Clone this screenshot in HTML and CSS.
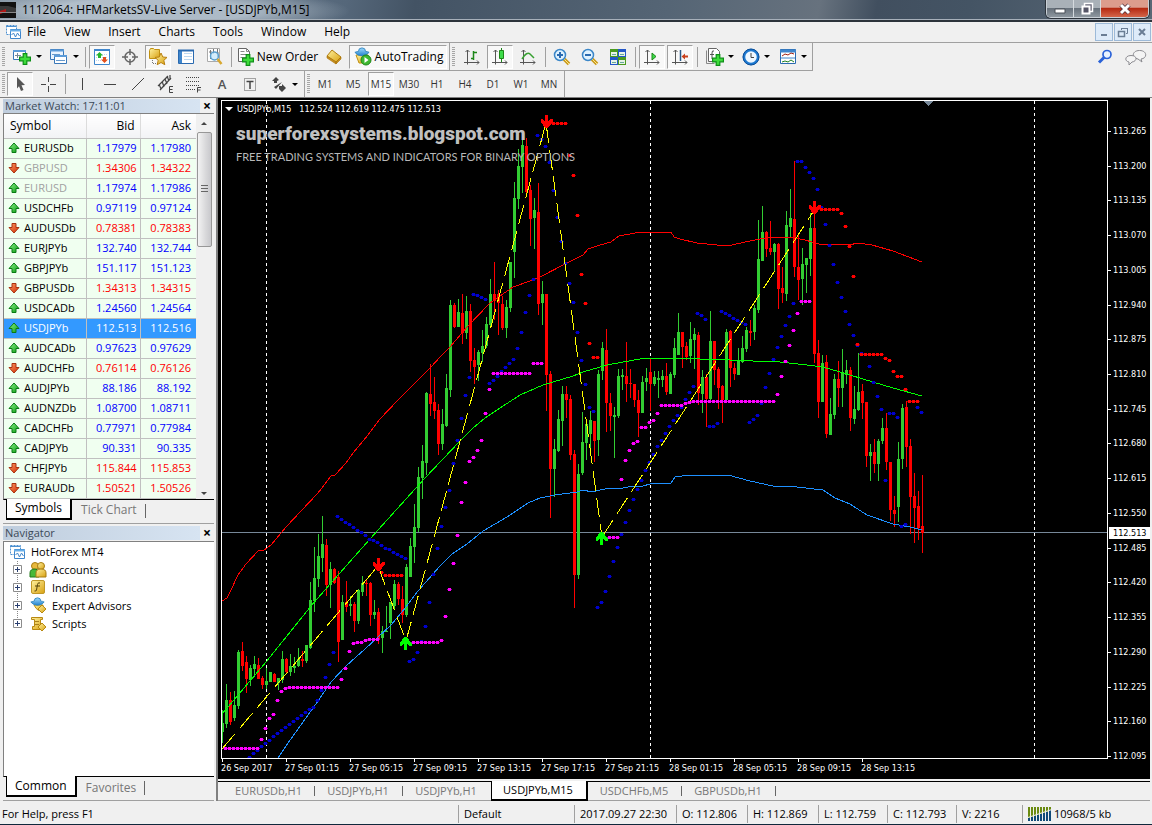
FILE: index.html
```html
<!DOCTYPE html>
<html lang="en">
<head>
<meta charset="utf-8">
<title>1112064: HFMarketsSV-Live Server - [USDJPYb,M15]</title>
<link rel="stylesheet" href="styles.css">
<script src="chart.js" defer></script>
</head>
<body>
<svg class="defs" aria-hidden="true">
  <defs>
    <linearGradient id="gGreen" x1="0" y1="0" x2="1" y2="1"><stop offset="0" stop-color="#8df58a"/><stop offset="1" stop-color="#0a9a12"/></linearGradient>
    <linearGradient id="gRed" x1="0" y1="0" x2="1" y2="1"><stop offset="0" stop-color="#ff9a66"/><stop offset="1" stop-color="#d02c00"/></linearGradient>
    <linearGradient id="gGold" x1="0" y1="0" x2="1" y2="1"><stop offset="0" stop-color="#fff2a0"/><stop offset="1" stop-color="#d8a010"/></linearGradient>
    <linearGradient id="gBlue" x1="0" y1="0" x2="0" y2="1"><stop offset="0" stop-color="#9fdcff"/><stop offset="1" stop-color="#2280cc"/></linearGradient>
    <symbol id="up" viewBox="0 0 12 12"><path d="M6 1 11 6.500H8V10.500H4V6.500H1Z" fill="url(#gGreen)" stroke="#0a7a14"/></symbol>
    <symbol id="down" viewBox="0 0 12 12"><path d="M6 11 11 5.500H8V1.500H4V5.500H1Z" fill="url(#gRed)" stroke="#a83210"/></symbol>
    <symbol id="charts" viewBox="0 0 16 16"><path d="M1.500 1.500h10v9h-10z" fill="#fff" stroke="#4d90d0" stroke-dasharray="2 1"/><path d="M1.500 2.500h10" stroke="#4d90d0"/><path d="M5.500 5.500h10v9h-10z" fill="#fff" stroke="#3f86cc"/><path d="M5 6.500h11" stroke="#69aee8" stroke-width="2"/><path d="M6.500 11l2-2 2 4 2-4 2 3" fill="none" stroke="#3f86cc"/></symbol>
    <symbol id="plus" viewBox="0 0 10 10"><path d="M3.500.5h3v3h3v3h-3v3h-3v-3h-3v-3h3z" fill="#3ddc3a" stroke="#0c8f16"/></symbol>
    <symbol id="axes" viewBox="0 0 18 18"><path d="M4.500 2v14.500M1 14.500h15M2.500 4l2-2 2 2M14 12.500l2 2-2 2" fill="none" stroke="#555"/></symbol>
    <symbol id="hat" viewBox="0 0 18 18"><path d="M1 6q3-1 4-1 0-4 4-4t4 4q2 0 4 1-3 4-8 4t-8-4z" fill="url(#gBlue)" stroke="#2d83bd"/></symbol>
    <symbol id="box" viewBox="0 0 9 9"><path d="M.5.5h8v8h-8z" fill="#fff" stroke="#8c8c8c"/><path d="M2 4.500h5M4.500 2v5" stroke="#2a3f70"/></symbol>
  </defs>
</svg>
<div class="app">
  <header class="title">
    <svg class="logo" width="16" height="16" viewBox="0 0 16 16"><path d="M0 0h16v16H0z" fill="#111"/><path d="M0 4h8l8 2v4H0z" fill="#383838"/><path d="M0 9l6-2v3l-6 2z" fill="#b01818"/><path d="M0 10h16v1H0z" fill="#888"/></svg>
    <h1>1112064: HFMarketsSV-Live Server - [USDJPYb,M15]</h1>
    <div class="winbtns">
      <button aria-label="Minimize"><svg width="14" height="12"><path d="M2 6h10v4H2z" fill="#fff" stroke="#4a5058"/></svg></button>
      <button aria-label="Restore"><svg width="14" height="14"><path d="M4.500 1.500h8v8h-8z" fill="#667" stroke="#fff" stroke-width="1.500"/><path d="M2.500 4.500h7v7h-7z" fill="#556" stroke="#fff" stroke-width="2"/></svg></button>
      <button class="close" aria-label="Close"><svg width="14" height="12"><path d="M3 2l8 8M11 2l-8 8" stroke="#50303a" stroke-width="4.500"/><path d="M3 2l8 8M11 2l-8 8" stroke="#fff" stroke-width="3"/></svg></button>
    </div>
  </header>

  <nav class="menu">
    <svg width="16" height="16"><use href="#charts"/></svg>
    <button>File</button><button>View</button><button>Insert</button><button>Charts</button><button>Tools</button><button>Window</button><button>Help</button>
    <div class="mdi">
      <button aria-label="Minimize chart"><svg width="12" height="12"><path d="M3 9h6" stroke="#6a7d94" stroke-width="2"/></svg></button>
      <button aria-label="Restore chart"><svg width="12" height="12"><path d="M4.500 4V2.500h6v5H9M4 2.500h7" fill="none" stroke="#6a7d94"/><path d="M1.500 5.500h6v5h-6zM1 5.500h7" fill="none" stroke="#6a7d94" stroke-width="1.500"/></svg></button>
      <button aria-label="Close chart"><svg width="12" height="12"><path d="M3 3l6 6M9 3l-6 6" stroke="#6a7d94" stroke-width="2"/></svg></button>
    </div>
  </nav>

  <div class="bar">
    <div class="group">
      <i class="grip"></i>
      <button class="tb drop" aria-label="New chart"><svg width="20" height="18"><path d="M1.500 2.500h12v9h-12z" fill="#fff" stroke="#3a78b8"/><path d="M1 3h13" stroke="#5c9bd8" stroke-width="2"/><path d="M3 7.500h6M5.500 5v5" stroke="#789"/><use href="#plus" x="7" y="5" width="12" height="12"/></svg></button>
      <button class="tb drop" aria-label="Profiles"><svg width="20" height="18"><path d="M1.500 1.500h13v10h-13z" fill="#eaf4ff" stroke="#3a78b8"/><path d="M1 2.500h14" stroke="#5c9bd8" stroke-width="2"/><path d="M5.500 7.500h12v8h-12z" fill="#fff" stroke="#3a78b8"/><path d="M5 8h13" stroke="#5c9bd8" stroke-width="2"/><path d="M3 6.500h8M7 12.500h9" stroke="#69c"/></svg></button>
      <i class="sep"></i>
      <button class="tb on" aria-label="Market Watch"><svg width="18" height="18"><path d="M1.500 1.500h15v15h-15z" fill="#fff" stroke="#3f86cc"/><path d="M1 2h16" stroke="#3f86cc" stroke-width="2"/><path d="M3 6.500h12M3 9.500h12M3 12.500h12" stroke="#bcd8f0" stroke-dasharray="1 1"/><path d="M6.500 4l3.500 3.500H8V10H5V7.500H3z" fill="#25b52a"/><path d="M11.500 15l3.500-3.500h-2V9h-3v2.500H8z" fill="#e4501c"/></svg></button>
      <button class="tb" aria-label="Data Window"><svg width="18" height="18"><circle cx="9" cy="9" r="5" fill="none" stroke="#666" stroke-width="1.500"/><path d="M9 1v6M9 11v6M1 9h6M11 9h6" stroke="#666" stroke-width="1.500"/></svg></button>
      <button class="tb on" aria-label="Navigator"><svg width="20" height="20"><path d="M1.500 3.500v8h10v-9h-5l-1-1h-3z" fill="url(#gGold)" stroke="#c09010"/><path d="M4.500 13v4M5 16.500h5" stroke="#777" stroke-dasharray="1 1"/><path d="M13 6l1.800 4 4.200.4-3.200 3 1 4.300L13 15.500l-3.800 2.200 1-4.300-3.200-3 4.200-.4z" fill="url(#gGold)" stroke="#b88010"/></svg></button>
      <button class="tb" aria-label="Terminal"><svg width="18" height="18"><path d="M1.500 2.500h15v13h-15z" fill="#fff" stroke="#2a6ab0"/><path d="M2 3h3v12H2z" fill="#3f86cc"/><path d="M7 5.500h8M7 8.500h8M7 11.500h8" stroke="#bcd8f0"/><path d="M1 2.500h16" stroke="#2a6ab0" stroke-width="2"/></svg></button>
      <button class="tb" aria-label="Strategy Tester"><svg width="19" height="19"><path d="M2.500 1.500h12v13h-12z" fill="#fff" stroke="#aaa"/><path d="M5.500 3v9M8.500 2v5M12.500 2v8M4 5h3M11 6h3" stroke="#777"/><circle cx="9.500" cy="9" r="4" fill="#c9e8fb" fill-opacity=".8" stroke="#5aa0d0" stroke-width="1.500"/><path d="M12.500 12l4 5" stroke="#d8a830" stroke-width="2.500"/></svg></button>
      <i class="sep"></i>
      <button class="tb wide"><svg width="19" height="19"><path d="M2.500 1.500h8l3 3v10h-11z" fill="#fff" stroke="#666"/><path d="M10.500 1.500v3h3M4.500 4.500h4M4.500 7.500h7M4.500 10.500h7" fill="none" stroke="#888"/><use href="#plus" x="6" y="7" width="12" height="12"/></svg>New Order</button>
      <button class="tb" aria-label="MetaEditor"><svg width="18" height="18"><path d="M7 2l9 7-5 5-9-6z" fill="url(#gGold)" stroke="#b07d10"/><path d="M2 8l9 6v2L2 10zM11 14l5-5v2l-5 5z" fill="#c8901c" stroke="#a87008" stroke-width=".6"/></svg></button>
      <button class="tb on auto"><svg width="20" height="20"><path d="M3 8h12l-3 8H6z" fill="url(#gGold)" stroke="#c09010"/><use href="#hat" width="18" height="16"/><circle cx="13" cy="13" r="5" fill="#3fb832" stroke="#1d8718"/><path d="M11.500 10v6l4-3z" fill="#fff"/></svg>AutoTrading</button>
    </div>
    <div class="group">
      <i class="grip"></i>
      <button class="tb" aria-label="Bar Chart"><svg width="18" height="18"><use href="#axes"/><path d="M10.500 3v9M8 10.500h2M11 4.500h3" stroke="#1d8718" stroke-width="1.500"/></svg></button>
      <button class="tb on" aria-label="Candlesticks"><svg width="18" height="18"><use href="#axes"/><path d="M10.500 0v14" stroke="#1d8718"/><path d="M8.500 2.500h4v8h-4z" fill="#3ddc4a" stroke="#1d8718"/></svg></button>
      <button class="tb" aria-label="Line Chart"><svg width="18" height="18"><use href="#axes"/><path d="M3 11q5-8 8-5l4 4" fill="none" stroke="#36a030" stroke-width="1.500"/></svg></button>
      <i class="sep"></i>
      <button class="tb" aria-label="Zoom In"><svg width="18" height="18"><path d="M11 11l5 5" stroke="#c99a1c" stroke-width="3.500"/><path d="M11 11l5 5" stroke="#ffe88a"/><circle cx="7" cy="7" r="5.500" fill="#dff2ff" stroke="#3a86c8" stroke-width="1.500"/><path d="M4 7h6M7 4v6" stroke="#2a6ab0" stroke-width="2"/></svg></button>
      <button class="tb" aria-label="Zoom Out"><svg width="18" height="18"><path d="M11 11l5 5" stroke="#c99a1c" stroke-width="3.500"/><path d="M11 11l5 5" stroke="#ffe88a"/><circle cx="7" cy="7" r="5.500" fill="#dff2ff" stroke="#3a86c8" stroke-width="1.500"/><path d="M4 7h6" stroke="#2a6ab0" stroke-width="2"/></svg></button>
      <button class="tb" aria-label="Tile Windows"><svg width="18" height="18"><path d="M1 1h8v8H1zM9 9h8v8H9z" fill="#4a9a20"/><path d="M9 1h8v8H9zM1 9h8v8H1z" fill="#2458c8"/><path d="M2 4h6v4H2zM10 4h6v4h-6zM2 12h6v4H2zM10 12h6v4h-6z" fill="#e8f2e8"/><path d="M3 6.500h4M11 6.500h4M3 14.500h4M11 14.500h4" stroke="#6a9"/></svg></button>
      <i class="sep"></i>
      <button class="tb on" aria-label="Auto Scroll"><svg width="18" height="18"><use href="#axes"/><path d="M9 5v7l4-3.500z" fill="#3ddc4a" stroke="#1d8718"/></svg></button>
      <button class="tb on" aria-label="Chart Shift"><svg width="18" height="18"><use href="#axes"/><path d="M9.500 2v11" stroke="#2a5a88" stroke-width="1.500"/><path d="M10.500 8.500l3.500-3v2h3v2h-3v2z" fill="#c8401c"/></svg></button>
      <i class="sep"></i>
      <button class="tb drop" aria-label="Indicators"><svg width="20" height="19"><path d="M4.500 1.500h8l3 3v10h-11z" fill="#fff" stroke="#666"/><path d="M2.500 3.500v13h8" fill="none" stroke="#888"/><path d="M10 4q-2-1-2 2v6M6 7.500h4" fill="none" stroke="#555"/><use href="#plus" x="8" y="7" width="12" height="12"/></svg></button>
      <button class="tb drop" aria-label="Periods"><svg width="18" height="18"><circle cx="9" cy="9" r="7" fill="#eef7ff" stroke="#1c78d0" stroke-width="2.500"/><circle cx="9" cy="9" r="8" fill="none" stroke="#0d4f98"/><path d="M9 5v4.500h3" fill="none" stroke="#444"/></svg></button>
      <button class="tb drop" aria-label="Templates"><svg width="18" height="18"><path d="M1.500 1.500h15v14h-15z" fill="#fff" stroke="#2a6ab0"/><path d="M1 3h16" stroke="#3f86cc" stroke-width="3"/><path d="M2 10h14" stroke="#3f86cc"/><path d="M3 8l3-2 3 1 3-2 3 1" fill="none" stroke="#a02010"/><path d="M3 14l3-1 3 1 3-2 3 2" fill="none" stroke="#208020"/></svg></button>
    </div>
    <div class="tools-right">
      <button aria-label="Search"><svg width="16" height="16"><circle cx="10" cy="5.500" r="4" fill="#e8f2ff" stroke="#2a62d8" stroke-width="1.700"/><path d="M7 8.500l-5 5" stroke="#2a62d8" stroke-width="3"/></svg></button>
      <button aria-label="Chat"><svg width="22" height="17"><path d="M14.500 1.500c8 0 8 8 1.500 8.500l1 3-4-3c-7-1-6-8.500 1.500-8.500z" fill="#f4f4f4" stroke="#8b8b90"/><path d="M6 6.500c7 0 6 6 1 6.500l-3 3v-3c-5-1-4-6.500 2-6.500z" fill="#f4f4f4" stroke="#8b8b90"/></svg></button>
    </div>
  </div>

  <div class="bar low">
    <div class="group">
      <i class="grip"></i>
      <button class="tb on" aria-label="Cursor"><svg width="18" height="18"><path d="M6 2l8 8-3.500.3 2 4.700-2.500 1-2-4.700L6 13.500z" fill="#555"/></svg></button>
      <button class="tb" aria-label="Crosshair"><svg width="18" height="18"><path d="M9.500 2v5M9.500 11v6M2 9.500h5M11 9.500h6" stroke="#444"/></svg></button>
      <i class="sep"></i>
      <button class="tb" aria-label="Vertical line"><svg width="18" height="18"><path d="M9.500 3v12" stroke="#444"/></svg></button>
      <button class="tb" aria-label="Horizontal line"><svg width="18" height="18"><path d="M3 9.500h12" stroke="#444"/></svg></button>
      <button class="tb" aria-label="Trendline"><svg width="18" height="18"><path d="M3 15L15 3" stroke="#444"/></svg></button>
      <button class="tb" aria-label="Channel"><svg width="20" height="20"><path d="M2 12L12 2M4 16L15 4M3 10l2 5M6 7l2 6M9 5l2 5M11 2l2 5M14 1v5" stroke="#444" stroke-width="1.200" fill="none"/><path d="M17 12.500h-3.500v6H17M13.500 15.500h3" fill="none" stroke="#444"/></svg></button>
      <button class="tb" aria-label="Fibonacci"><svg width="20" height="20"><path d="M2 3.500h14M2 7.500h14M2 11.500h14M2 15.500h9" stroke="#444" stroke-dasharray="1 1"/><path d="M17 13.500h-3.500v5M13.500 16h3" fill="none" stroke="#444"/></svg></button>
      <button class="tb letter" aria-label="Text">A</button>
      <button class="tb" aria-label="Text label"><svg width="18" height="18"><path d="M3.500 3.500h11v12h-11z" fill="none" stroke="#555" stroke-dasharray="1 1"/><path d="M5.500 6.500h7M9 6v8" stroke="#444" stroke-width="1.500"/></svg></button>
      <button class="tb drop" aria-label="Arrows"><svg width="18" height="18"><path d="M2 6l4-4 3 3-2 1v2H4V6zM9 11h3V9l4 4-4 4-3-3zM4 12l2 2 6-7" fill="#444"/></svg></button>
    </div>
    <div class="group">
      <i class="grip"></i>
      <button class="tb tf">M1</button><button class="tb tf">M5</button><button class="tb tf on">M15</button><button class="tb tf">M30</button><button class="tb tf">H1</button><button class="tb tf">H4</button><button class="tb tf">D1</button><button class="tb tf">W1</button><button class="tb tf">MN</button>
    </div>
  </div>

  <main class="work">
    <aside class="side">
      <section class="panel">
        <div class="phead"><h2>Market Watch: 17:11:01</h2><button aria-label="Close Market Watch">×</button></div>
        <div class="pbody watch">
          <table>
            <thead><tr><th>Symbol</th><th>Bid</th><th>Ask</th></tr></thead>
            <tbody>
              <tr class="u"><td><svg><use href="#up"/></svg>EURUSDb</td><td>1.17979</td><td>1.17980</td></tr>
              <tr class="d off"><td><svg><use href="#down"/></svg>GBPUSD</td><td>1.34306</td><td>1.34322</td></tr>
              <tr class="u off"><td><svg><use href="#up"/></svg>EURUSD</td><td>1.17974</td><td>1.17986</td></tr>
              <tr class="u"><td><svg><use href="#up"/></svg>USDCHFb</td><td>0.97119</td><td>0.97124</td></tr>
              <tr class="d"><td><svg><use href="#down"/></svg>AUDUSDb</td><td>0.78381</td><td>0.78383</td></tr>
              <tr class="u"><td><svg><use href="#up"/></svg>EURJPYb</td><td>132.740</td><td>132.744</td></tr>
              <tr class="u"><td><svg><use href="#up"/></svg>GBPJPYb</td><td>151.117</td><td>151.123</td></tr>
              <tr class="d"><td><svg><use href="#down"/></svg>GBPUSDb</td><td>1.34313</td><td>1.34315</td></tr>
              <tr class="u"><td><svg><use href="#up"/></svg>USDCADb</td><td>1.24560</td><td>1.24564</td></tr>
              <tr class="u sel"><td><svg><use href="#up"/></svg>USDJPYb</td><td>112.513</td><td>112.516</td></tr>
              <tr class="u"><td><svg><use href="#up"/></svg>AUDCADb</td><td>0.97623</td><td>0.97629</td></tr>
              <tr class="d"><td><svg><use href="#down"/></svg>AUDCHFb</td><td>0.76114</td><td>0.76126</td></tr>
              <tr class="u"><td><svg><use href="#up"/></svg>AUDJPYb</td><td>88.186</td><td>88.192</td></tr>
              <tr class="u"><td><svg><use href="#up"/></svg>AUDNZDb</td><td>1.08700</td><td>1.08711</td></tr>
              <tr class="u"><td><svg><use href="#up"/></svg>CADCHFb</td><td>0.77971</td><td>0.77984</td></tr>
              <tr class="u"><td><svg><use href="#up"/></svg>CADJPYb</td><td>90.331</td><td>90.335</td></tr>
              <tr class="d"><td><svg><use href="#down"/></svg>CHFJPYb</td><td>115.844</td><td>115.853</td></tr>
              <tr class="d"><td><svg><use href="#down"/></svg>EURAUDb</td><td>1.50521</td><td>1.50526</td></tr>
            </tbody>
          </table>
          <div class="scroll"><i class="arr upa"></i><div class="thumb"></div><i class="arr dna"></i></div>
        </div>
        <div class="tabs"><button class="cur">Symbols</button><button>Tick Chart</button></div>
      </section>
      <section class="panel nav">
        <div class="phead"><h2>Navigator</h2><button aria-label="Close Navigator">×</button></div>
        <div class="pbody tree">
          <div class="root"><svg width="16" height="16"><use href="#charts"/></svg>HotForex MT4</div>
          <ul>
            <li><svg width="9" height="9"><use href="#box"/></svg><svg width="18" height="17"><circle cx="6" cy="5" r="3.500" fill="#e8b83c" stroke="#a87c10"/><path d="M1 16v-4q0-4 5-4 3 0 4 3v5z" fill="#48b838" stroke="#207818"/><circle cx="12" cy="5" r="3.500" fill="url(#gGold)" stroke="#a87c10"/><path d="M7 16v-4q0-4 5-4t5 4v4z" fill="url(#gGold)" stroke="#a87c10"/></svg><span>Accounts</span></li>
            <li><svg width="9" height="9"><use href="#box"/></svg><svg width="18" height="17"><rect x="2.500" y="1.500" width="13" height="13" rx="1.500" fill="url(#gGold)" stroke="#c09828"/><path d="M11 4q-2-1-2.500 1.500L7.500 11q-.5 1.500-2 1M6 7h5" fill="none" stroke="#554408"/></svg><span>Indicators</span></li>
            <li><svg width="9" height="9"><use href="#box"/></svg><svg width="18" height="17"><path d="M5 8h9v5q-5 3-9-5z" fill="url(#gGold)" stroke="#c09010"/><use href="#hat" width="17" height="15"/><path d="M13 8l4 4-4 4-4-4z" fill="url(#gGold)" stroke="#b88810"/></svg><span>Expert Advisors</span></li>
            <li><svg width="9" height="9"><use href="#box"/></svg><svg width="18" height="17"><path d="M2.500 2.500h11v2h-2v7h3v3h-11v-3h2v-7h-3z" fill="url(#gGold)" stroke="#b88810"/><path d="M6 6.500h4M6 9.500h4" stroke="#a88020"/><path d="M13 8l4 4-4 4-4-4z" fill="url(#gGold)" stroke="#b88810"/></svg><span>Scripts</span></li>
          </ul>
        </div>
        <div class="tabs"><button class="cur">Common</button><button>Favorites</button></div>
      </section>
    </aside>

    <section class="chartwrap">
      <div class="chart">
        <div class="plot">
          <svg id="chart" aria-label="USDJPYb M15 candlestick chart"></svg>
          <div class="overlay">
            <p class="ohlc"><i></i><span>USDJPYb,M15</span><span>112.524 112.619 112.475 112.513</span></p>
            <p class="mark">superforexsystems.blogspot.com</p>
            <p class="submark">FREE TRADING SYSTEMS AND INDICATORS FOR BINARY OPTIONS</p>
          </div>
        </div>
        <div class="prices">
          <span>113.265</span><span>113.200</span><span>113.135</span><span>113.070</span><span>113.005</span><span>112.940</span><span>112.875</span><span>112.810</span><span>112.745</span><span>112.680</span><span>112.615</span><span>112.550</span><span>112.485</span><span>112.420</span><span>112.355</span><span>112.290</span><span>112.225</span><span>112.160</span><span>112.095</span>
          <b class="now">112.513</b>
        </div>
        <div class="times"><span>26 Sep 2017</span><span>27 Sep 01:15</span><span>27 Sep 05:15</span><span>27 Sep 09:15</span><span>27 Sep 13:15</span><span>27 Sep 17:15</span><span>27 Sep 21:15</span><span>28 Sep 01:15</span><span>28 Sep 05:15</span><span>28 Sep 09:15</span><span>28 Sep 13:15</span></div>
      </div>
      <div class="ctabs">
        <button>EURUSDb,H1</button><button>USDJPYb,H1</button><button>USDJPYb,H1</button><button class="cur">USDJPYb,M15</button><button>USDCHFb,M5</button><button>GBPUSDb,H1</button>
        <div class="pager"><i class="lf"></i><i class="rt"></i></div>
      </div>
    </section>
  </main>

  <footer class="status">
    <span class="help">For Help, press F1</span><span class="prof">Default</span><span class="date">2017.09.27 22:30</span><span class="o">O: 112.806</span><span class="h">H: 112.869</span><span class="l">L: 112.759</span><span class="c">C: 112.793</span><span class="v">V: 2216</span>
    <span class="net"><svg width="24" height="14"><path d="M1 0v14M4 0v14M7 0v14M10 0v14M13 0v14M16 0v14M19 0v14M22 0v14" stroke="#6a8a10" stroke-width="2"/><path d="M1 11v3M4 10v4M7 9v5M10 8v6M13 7v7M16 6v8M19 5v9M22 3v11" stroke="#104a78" stroke-width="2"/><path d="M0 10.500L24 2.500" stroke="#f0f0f0"/></svg>10968/5 kb</span>
  </footer>
</div>
</body>
</html>
```
FILE: styles.css
```css
* { box-sizing: border-box; }
html, body { height: 100%; }
body { margin: 0; font: 11px/16px "Open Sans", "Noto Sans", sans-serif; color: #000; background: #f0f0f0; }
button { font: inherit; color: inherit; background: none; border: 0; padding: 0; margin: 0; }
h1, h2, p, ul { margin: 0; padding: 0; font: inherit; list-style: none; }
svg { display: block; flex: none; }
.defs { position: absolute; width: 0; height: 0; }
.app { display: flex; flex-direction: column; height: 100vh; min-height: 700px; border-bottom: 1px solid #10283c; overflow: hidden; }

.title { flex: none; display: flex; align-items: center; height: 22px; border-bottom: 2px solid #2c333b; background: radial-gradient(ellipse 200px 24px at 150px 11px, rgba(205,216,226,.7) 0 50%, transparent 100%), linear-gradient(100deg, #788a9a 0, #55677a 30%, #435364 36%, #556575 58%, #67727e 71%, #414f5f 76%, #445464 84%, #5a6876 100%); box-shadow: inset 0 -1px #a7b0ba; }
.title h1 { padding-left: 6px; font-size: 12px; white-space: nowrap; }
.winbtns { display: flex; align-self: flex-start; margin: 0 3px 0 auto; height: 18px; border: 1px solid #c9d0d6; border-top: 0; border-radius: 0 0 5px 5px; overflow: hidden; box-shadow: 0 0 0 1px #2c333b; }
.winbtns button { display: flex; align-items: center; justify-content: center; width: 27px; border-right: 1px solid #d5dade; background: linear-gradient(#a9b1b8 0 45%, #68727c 50%, #8e979f); }
.winbtns .close { width: 47px; border: 0; background: linear-gradient(#dc9c8c 0 42%, #b52a12 50%, #d4664a); }

.menu { flex: none; display: flex; align-items: center; height: 21px; padding-left: 5px; border-bottom: 1px solid #a0a0a0; background: #f0f0f0; font-size: 12px; }
.menu > button { margin-left: 18px; white-space: nowrap; }
.menu > svg + button { margin-left: 6px; }
.mdi { display: flex; gap: 1px; margin: 0 1px 0 auto; }
.mdi button { display: flex; align-items: center; justify-content: center; width: 18px; height: 18px; border: 1px solid #9dbad8; background: #deebf9; }

.bar { flex: none; display: flex; height: 28px; background: #f0f0f0; }
.low { height: 27px; border-bottom: 1px solid #808080; }
.group { display: flex; align-items: center; border-right: 1px solid #a0a0a0; border-bottom: 1px solid #a0a0a0; padding-right: 1px; }
.low .group { border-bottom: 0; }
.grip { width: 3px; height: 20px; margin: 0 3px 0 2px; background: repeating-linear-gradient(#a6a6a6 0 1px, #f0f0f0 1px 2px); }
.low .grip { margin-right: 1px; }
.sep { width: 1px; height: 20px; margin: 0 2px 0 3px; background: #a0a0a0; }
.tb { display: flex; align-items: center; justify-content: center; width: 28px; height: 24px; border: 1px solid transparent; white-space: nowrap; }
.tb.on { border-color: #a0a0a0 #fff #fff #a0a0a0; margin: 0 1px; width: 26px; background: #f8f8f8; }
.tb.drop { width: 37px; gap: 4px; }
.tb.drop::after { content: ""; border: 3px solid transparent; border-top-color: #000; border-bottom: 0; }
.low .tb.drop { width: 39px; }
.tb.wide { width: 86px; gap: 2px; font-size: 12px; }
.tb.on.auto { width: 98px; gap: 2px; font-size: 12px; }
.letter { font-weight: 600; font-size: 13px; color: #555; }
.tf { font-size: 10px; color: #333; }
.tools-right { display: flex; align-items: center; gap: 12px; margin: 0 5px 0 auto; }

.work { flex: 1; min-height: 0; display: flex; }
.side { flex: none; width: 218px; display: flex; flex-direction: column; border-right: 2px solid #808080; padding: 0 2px 0 3px; }
.panel { display: flex; flex-direction: column; border-bottom: 1px solid #a0a0a0; padding-bottom: 2px; }
.nav { flex: 1; padding-top: 2px; }
.phead { display: flex; align-items: center; height: 15px; }
.phead h2 { flex: 1; padding-left: 2px; line-height: 14px; color: #3c4a58; background: linear-gradient(90deg, #bfcddd, #d7e4f2); }
.phead button { width: 14px; font-weight: 700; line-height: 14px; font-size: 14px; }
.pbody { border: 1px solid #808080; border-right: 0; border-bottom: 0; background: #fff; }
.watch { display: flex; background: #f0f0f0; border-bottom: 1px solid #000; }
table { flex: 1; border-collapse: collapse; table-layout: fixed; }
th { height: 24px; padding: 0 5px 0 0; text-align: right; font-weight: 400; font-size: 12px; border-right: 1px solid #dcdcdc; border-bottom: 1px solid #c0c0c0; background: linear-gradient(#fff, #f2f3f5); }
th:first-child { width: 82px; text-align: left; padding-left: 6px; }
td { height: 20px; padding: 0 3px 0 0; text-align: right; background: #f0fff0; border-right: 1px solid #c0c0c0; border-bottom: 1px solid #c0c0c0; color: #00f; }
td:last-child, th:last-child { padding-right: 5px; border-right: 0; }
td:first-child { text-align: left; color: #000; padding-left: 4px; }
td svg { float: left; width: 12px; height: 12px; margin: 2px 4px 0 0; }
.d td + td { color: #f00; }
.off td:first-child { color: #a0a0a0; }
.sel td, .sel td:first-child { background: #3399ff; color: #fff; }
.scroll { width: 18px; display: flex; flex-direction: column; align-items: center; background: #f0f0f0; padding: 8px 2px 4px 0; }
.arr { border: 3px solid transparent; }
.upa { border-bottom-color: #444; border-top: 0; }
.dna { border-top-color: #444; border-bottom: 0; margin-top: auto; }
.thumb { width: 15px; height: 115px; margin-top: 7px; border: 1px solid #979797; border-radius: 2px; background: repeating-linear-gradient(#666 0 1px, transparent 1px 3px) center / 7px 9px no-repeat, linear-gradient(90deg, #f3f3f3, #d8d8da 60%, #c8c8cc); }
.tabs { flex: none; display: flex; height: 21px; padding-left: 3px; font-size: 12px; }
.tabs button { position: relative; padding: 0 9px; color: #777; line-height: 18px; }
.tabs button:not(.cur)::after { content: ""; position: absolute; right: 0; top: 4px; bottom: 3px; border-right: 1px solid #666; }
.tabs .cur { padding: 0 8px; margin-top: -1px; height: 21px; background: #fff; color: #000; border: solid #000; border-width: 0 2px 2px 1px; }
.tree { flex: 1; padding: 1px 0 0 5px; border-bottom: 1px solid #000; line-height: 18px; }
.root { display: flex; gap: 6px; align-items: center; height: 18px; }
.tree ul { margin-left: 4px; background: repeating-linear-gradient(#888 0 1px, transparent 1px 2px) 4px 0 / 1px 62px no-repeat; }
.tree li { display: flex; align-items: center; height: 18px; }
.tree li svg + svg { margin-left: 6px; }
.tree li svg:first-child { margin-right: 1px; }
.tree span { margin-left: 5px; }

.chartwrap { flex: 1; min-width: 0; display: flex; flex-direction: column; padding-right: 2px; }
.chart { flex: 1; min-height: 0; display: grid; grid-template: minmax(0, 1fr) 20px / minmax(0, 1fr) 42px; background: #000; padding: 2px 0 0 3px; color: #fff; font: 9px/12px "DejaVu Sans Condensed", "Liberation Sans", sans-serif; }
.plot { position: relative; border: 1px solid #fff; overflow: hidden; }
.plot svg { width: 100%; height: 100%; }
.overlay { position: absolute; left: 0; top: 0; }
.ohlc { display: flex; align-items: center; gap: 8px; height: 16px; padding-left: 3px; }
.ohlc i { border: 4px solid transparent; border-top-color: #fff; border-bottom: 0; margin-right: -4px; }
.mark { padding: 3px 0 0 14px; font: 900 19px/28px Roboto, "Liberation Sans", sans-serif; color: #c0c0c0; }
.submark { padding: 1px 0 0 14px; font: 11px/16px Lato, sans-serif; color: #b8b8b8; white-space: nowrap; }
.prices { position: relative; grid-row: span 2; display: flex; flex-direction: column; justify-content: space-between; padding: 25px 0 17px; }
.prices span { position: relative; padding-left: 5px; }
.prices span::before { content: ""; position: absolute; left: 0; top: 6px; width: 3px; border-top: 1px solid #fff; }
.now { position: absolute; left: 1px; right: 0; top: 427px; font-weight: 400; padding-left: 4px; background: #fff; color: #000; }
.times { display: flex; }
.times span { position: relative; flex: none; width: 64px; padding-top: 3px; white-space: nowrap; }
.times span::before { content: ""; position: absolute; left: 1px; top: 0; height: 3px; border-left: 1px solid #fff; }
.ctabs { flex: none; display: flex; height: 20px; border-top: 1px solid #000; border-bottom: 1px solid #a0a0a0; margin-top: 2px; }
.ctabs button { position: relative; width: 88px; padding-right: 2px; line-height: 18px; color: #777; white-space: nowrap; }
.ctabs button:first-child { width: 97px; padding: 0 0 0 4px; }
.ctabs button:not(.cur)::after { content: ""; position: absolute; right: 0; top: 4px; bottom: 4px; border-right: 1px solid #666; }
.ctabs button:nth-child(3)::after { display: none; }
.ctabs .cur { width: 97px; height: 20px; margin-top: -1px; background: #fff; color: #000; border: solid #000; border-width: 0 2px 2px 1px; }
.ctabs .cur ~ button { width: 94px; }
.pager { display: flex; gap: 14px; align-items: center; margin: 0 7px 2px auto; }
.pager i { border: 4px solid transparent; }
.lf { border-right-color: #888; border-left-width: 0; }
.rt { border-left-color: #888; border-right-width: 0; }

.status { flex: none; display: flex; height: 23px; align-items: center; padding-top: 2px; white-space: nowrap; }
.status span { height: 18px; line-height: 18px; padding-left: 5px; border-left: 1px solid #a0a0a0; }
.status .help { flex: 1; padding-left: 2px; border: 0; }
.prof { width: 116px; }
.date { width: 102px; }
.o, .h { width: 71px; }
.l, .c { width: 69px; }
.v { width: 66px; }
.net { display: flex; align-items: center; gap: 2px; width: 130px; }
```
FILE: chart.js
```js
// Candle: [direction, high, body top, body bottom, low], one every STEP pixels.
const STEP = 4;
const candles = `
g710,723,732,743 g684,700,724,728 r692,700,722,725 g691,705,718,721 g650,652,706,709 r642,651,666,671 r656,662,679,693 g665,668,680,686
g656,664,669,677 r658,665,679,679 r676,678,685,689 g668,681,685,689 g672,672,682,682 r673,674,682,682 g678,678,683,690 g651,659,680,683
r658,659,672,674 g654,666,672,676 g657,666,668,673 g648,659,666,667 r651,659,661,667 g645,645,661,663 g582,600,648,649 g547,578,601,612
g534,556,579,587 g516,544,558,572 r539,545,585,596 g562,569,585,608 r568,569,583,584 r571,577,642,662 g595,602,640,640 r581,602,607,612
g596,604,606,616 r602,604,621,632 g589,590,621,624 g576,583,592,596 r579,583,584,596 r582,583,615,626 g600,612,615,619 r608,612,639,644
g626,631,638,653 g606,631,632,632 g602,602,623,639 g580,584,606,610 r582,584,599,605 r586,599,615,623 g564,567,615,617 g538,546,577,577
g504,527,547,563 g467,477,528,532 g445,461,478,499 g392,393,463,475 r364,394,404,416 r377,402,411,419 r404,410,444,455 g409,424,444,450
g374,388,426,427 g300,305,390,397 r303,305,327,328 g299,312,327,327 r294,313,333,344 g296,311,333,339 r304,311,361,372 r348,360,367,384
g350,352,365,381 g330,346,353,362 g317,324,346,348 g279,294,325,326 r262,294,301,320 r290,294,303,335 r296,304,328,330 g300,307,328,338
g262,262,308,312 g182,198,252,278 g149,166,199,209 g135,145,167,193 r138,146,192,193 r185,190,219,246 g198,210,218,249 r183,212,304,315
g281,294,303,325 r294,294,375,411 r371,374,469,518 g439,449,469,497 g410,419,451,452 g386,394,421,446 r386,394,400,418 r395,399,455,460
r450,454,575,608 g464,474,575,579 g412,442,473,475 g421,424,443,460 g411,420,434,450 r421,421,441,462 g370,374,440,456 g342,348,371,380
r329,350,403,432 r393,403,416,431 g407,415,417,458 g369,376,416,418 g369,375,377,390 r342,376,384,402 r369,383,384,398 r384,384,400,407
r390,400,413,437 g376,382,413,413 g368,378,382,391 r359,372,384,411 g371,377,384,386 g371,378,380,398 g370,376,380,387 r363,376,392,395
g372,374,394,394 g338,348,375,378 g313,332,355,355 r332,332,347,368 r342,346,357,360 g322,339,356,363 g328,334,340,369 r332,335,393,405
g370,377,394,413 r374,377,399,427 g311,341,399,403 r341,341,370,385 r367,369,388,409 r385,386,400,423 g329,332,400,400 r330,331,368,387
r363,368,374,380 g348,361,375,375 g336,348,362,363 g327,330,349,352 r320,331,333,346 g305,308,332,340 g220,259,310,313 g206,232,261,261
r231,232,249,257 r221,248,252,255 g243,244,252,272 r243,244,289,309 r267,288,293,303 g211,225,294,301 g189,218,227,238 r161,219,267,277
r234,267,280,300 g248,264,279,305 g258,258,265,293 g213,228,259,276 r211,228,354,363 r340,353,402,418 g355,363,402,402 r355,362,434,438
g398,414,435,435 g374,379,415,419 r361,379,388,407 g349,372,388,407 g360,370,375,384 r367,370,418,431 g386,409,419,424 g353,392,410,411
r384,391,403,419 r402,402,456,467 g444,452,456,481 r439,452,464,473 g439,441,464,481 g418,428,441,444 r413,428,462,470 r462,462,510,521
r496,510,514,527 g442,459,507,522 g404,408,459,469 r401,407,447,467 r439,446,497,534 r473,496,508,543 r491,506,528,540 r475,526,533,553`
  .trim().split(/\s+/);

// Dots: "index: y y y", consecutive candles; "y*n" repeats.
const dots = {
  "#0000cd": `7: 757 753 750 746 743 740 736 733 730 727 724 721 718 715 712 709 707 700 690 677 664 652 516 519 522 524 527 530 532 535 539 540 542 545 548 549 552 554 556 558 661 659 652 641 626 602 574 548 526 507 490 463 440 418 395 377
63: 294 295 297 299 383 380 376 371 367 363 359 348 332 312 295 279
79: 135 139 146 162 190 217 241 263 283 302 332 360 384 407 411
94: 607 602 591 576 561 547 534 522 510 499 489 480 470 462 454 446 440 433 426 420 415 407 399 392 386
119: 313 315 319 426 426 423 311 313 315 318 320 322 324 422 419 415 403 387 373 359 347 336 325 316 303
144: 161 161 167 172 178 189 207 224 245 264 282 297 311 324 335 345 353 354 366 382 396 409 480 413 413 417 526 524
174: 407 412`,
  "#ff00ff": `1: 748*9 739 728 718 714 700 691 688 687*13 679 668 651 643 642*2 640 639*3
48: 642*7 640 616 589 563 535 502 482 461 457 450 440 413 389 373*10 363*3
97: 537*3 479 460 450 443 441 427*2 422 420 413 405*6 403 402 401*21 394 376 361 345 330 313 301*3`,
  "#ff0000": `40: 572 575*5
82: 123*5 155 175 215 274 303 343 357*2
150: 209*5 213 226 246 276 344 354*6 358 360 371 376*2 389 401*3`
};

const bands = {
  "#ff0000": "222,601 227,598 231,590 238,575 246,564 259,550 263,551 271,545 286,527 301,511 318,493 331,476 335,475 346,463 353,453 368,435 380,419 398,400 431,367 440,357 450,347 467,327 490,303 500,296 513,287 530,281 540,277 567,263 583,255 588,249 600,245 611,242 619,236 630,234 640,232 671,232 674,237 680,239 697,243 717,245 732,245 745,242 760,239 770,237 790,237 805,240 822,245 833,244 850,245 857,243 872,245 893,251 922,262",
  "#00ff00": "222,714 266,662 311,606 331,583 378,530 425,478 460,441 473,428 485,418 500,408 520,395 543,385 573,376 583,372 607,365 623,362 640,359 657,358 689,358 700,359 730,360 753,361 780,362 807,365 823,367 840,372 873,382 893,388 922,396",
  "#1e90ff": "278,758 288,743 318,701 331,682 346,666 365,649 378,637 391,625 406,607 418,591 440,566 452,554 467,544 483,531 507,517 528,503 540,498 555,495 577,492 583,490 592,492 600,490 610,488 618,489 628,487 643,486 650,484 662,483 667,484 671,483 675,477 682,476 692,475 728,475 750,481 773,486 797,487 823,490 835,498 850,504 867,515 893,524 910,527 922,530"
};

const parts = [];
const rect = (x, y, w, h, fill, opacity = 1) =>
  parts.push(`<rect x="${x}" y="${y}" width="${w}" height="${h}" fill="${fill}" fill-opacity="${opacity}"/>`);

for (const x of [266, 650, 1034])
  parts.push(`<path d="M${x}.5 101V758" stroke="#fff" stroke-dasharray="3 3"/>`);
rect(222, 532, 4000, 1, "#778899");

candles.forEach((c, i) => {
  const fill = c[0] === "g" ? "#32cd32" : "#ff0000";
  const [high, top, bottom, low] = c.slice(1).split(",").map(Number);
  const x = 222 + STEP * i;
  rect(x, high, 1, low - high || 1, fill);
  rect(x - 1, top, 3, bottom - top || 1, fill);
});

for (const [color, points] of Object.entries(bands))
  parts.push(`<polyline points="${points}" fill="none" stroke="${color}"/>`);

for (const [color, text] of Object.entries(dots))
  for (const line of text.split("\n")) {
    const [start, values] = line.split(":");
    let i = Number(start);
    for (const v of values.trim().split(" ")) {
      const [y, n = 1] = v.split("*").map(Number);
      for (let k = 0; k < n; k++, i++) {
        rect(219 + STEP * i, y, 5, 1, color, 0.6);
        rect(220 + STEP * i, y - 1, 3, 3, color);
      }
    }
  }

const zig = [[222, 749], [378, 566], [406, 641], [546, 123], [602, 537], [815, 209]];
zig.slice(1).forEach(([x, y], i) => {
  const [px, py] = zig[i];
  parts.push(`<path d="M${px} ${py}L${x} ${y}" stroke="#ffff00" stroke-dasharray="20 7"/>`);
});

const arrow = (x, y, dir, color) =>
  parts.push(`<path transform="translate(${x} ${y}) scale(1 ${dir})" d="M-1.500 0V-12H1.500V-5L4 -8H6V-5L1 1H-1L-6 -5V-8H-4L-1.500 -5Z" fill="${color}"/>`);
arrow(378.5, 570, 1, "#ff0000");
arrow(546.5, 127, 1, "#ff0000");
arrow(814.5, 213, 1, "#ff0000");
arrow(405.5, 638, -1, "#00ff00");
arrow(601.5, 533, -1, "#00ff00");
parts.push('<path d="M923 101h11l-5.500 5z" fill="#778899"/>');

document.getElementById("chart").innerHTML = `<g shape-rendering="crispEdges" transform="translate(-222 -101)">${parts.join("")}</g>`;
```
